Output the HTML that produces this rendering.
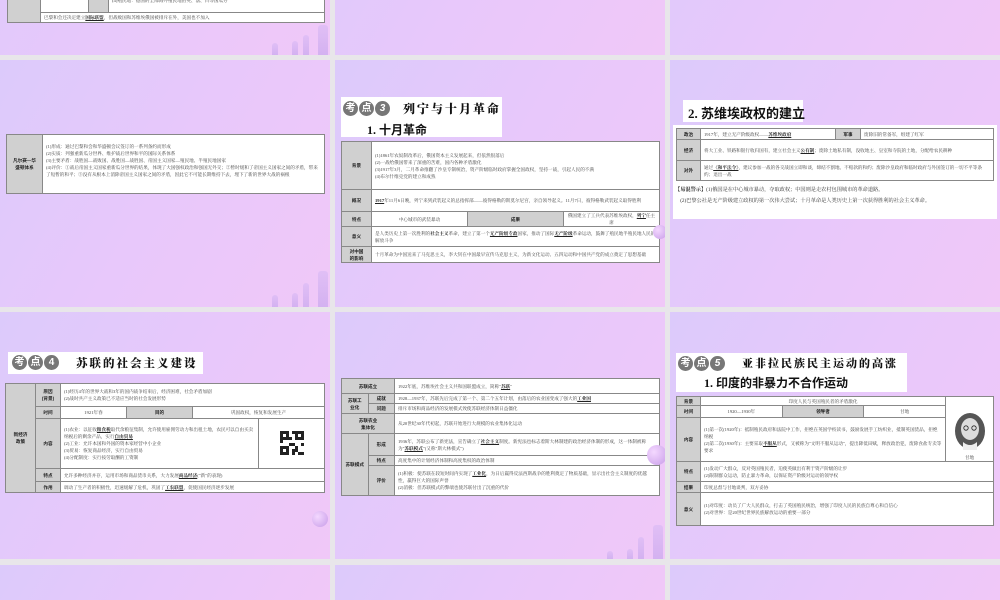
<!DOCTYPE html>
<html style="width:1000px;height:600px;overflow:hidden"><head><meta charset="utf-8"><style>
*{margin:0;padding:0;box-sizing:border-box}
body{width:1000px;height:600px;overflow:hidden;background:#e8e6ea;position:relative;font-family:"Liberation Serif","Noto Serif CJK SC","Noto Sans CJK SC",serif;color:#333}
.s{position:absolute;width:330px;height:247px;overflow:hidden;background:linear-gradient(120deg,#dccafb 0%,#e8c8fb 50%,#f0c8f8 100%)}
.bar{position:absolute;bottom:0;width:6px;background:linear-gradient(#d2b6f3,#b89ae9);border-radius:3px 3px 0 0;opacity:.5}
.ball{position:absolute;border-radius:50%;background:radial-gradient(circle at 35% 35%,#f4d8ff,#c79ce8)}
table{position:absolute;border-collapse:collapse;table-layout:fixed;background:#fff;font-size:4.6px;line-height:7px}
td{border:1px solid #888;padding:0 3px;vertical-align:middle;color:#444}
td.g{background:#d0d0d0;text-align:center;font-weight:bold;font-family:"Liberation Sans","Noto Sans CJK SC",sans-serif;color:#222;padding:0}
td.c{text-align:center}
table{border:1.5px solid #666}
.hb{position:absolute;background:#fff}
.kd{position:absolute;font-family:"Liberation Sans","Noto Sans CJK SC",sans-serif;font-weight:bold;color:#fff;font-size:10px}
.kd span{display:inline-block;width:15px;height:15px;border-radius:50%;background:#777;text-align:center;line-height:15px;margin-right:1px}
.t1{position:absolute;font-family:"Noto Serif CJK SC",serif;font-weight:900;font-size:12px;color:#111;letter-spacing:2px}
.t2{position:absolute;font-family:"Liberation Serif","Noto Sans CJK SC",serif;font-weight:bold;font-size:12px;color:#111}
b{color:#222}
</style></head><body>

<!-- Row 1 -->
<div class="s" style="left:0;top:-192px">
<table style="left:7px;top:180px;width:318px;height:35px"><tr style="height:24px"><td class="g" style="width:33px" rowspan="2"></td><td style="width:48px"></td><td class="g" style="width:20px"></td><td>(4)殖民地：德国的全部海外殖民地由英、法、日等国瓜分</td></tr><tr><td colspan="3">巴黎和会还决定建立<b><u>国际联盟</u></b>，但战败国和苏维埃俄国被排斥在外，美国也不加入</td></tr></table>
<div class="bar" style="left:272px;height:12px"></div><div class="bar" style="left:292px;height:14px"></div><div class="bar" style="left:303px;height:20px"></div><div class="bar" style="left:318px;height:30px;width:10px"></div>
</div>
<div class="s" style="left:335px;top:-192px"></div>
<div class="s" style="left:670px;top:-192px"></div>

<!-- Row 2 -->
<div class="s" style="left:0;top:60px">
<table style="left:6px;top:74px;width:319px;height:60px"><tr><td class="g" style="width:36px">凡尔赛—华<br>盛顿体系</td><td>(1)形成：通过巴黎和会和华盛顿会议签订的一系列条约而形成<br>(2)实质：列强重新瓜分世界、维护战后世界和平的国际关系体系<br>(3)主要矛盾：战胜国—战败国、战胜国—战胜国、帝国主义国家—殖民地、半殖民地国家<br>(4)评价：①战后帝国主义国家重新瓜分世界的结果，体现了大国强权政治和强国无外交；②暂时缓和了帝国主义国家之间的矛盾，带来了短暂的和平；③没有从根本上消除帝国主义国家之间的矛盾，因此它不可能长期维持下去，埋下了新的世界大战的祸根<br>&nbsp;</td></tr></table>
<div class="bar" style="left:272px;height:12px"></div><div class="bar" style="left:292px;height:14px"></div><div class="bar" style="left:303px;height:24px"></div><div class="bar" style="left:318px;height:36px;width:10px"></div>
</div>

<div class="s" style="left:335px;top:60px">
<div class="hb" style="left:6px;top:37px;width:161px;height:40px"></div>
<div class="kd" style="left:8px;top:41px"><span>考</span><span>点</span><span style="font-style:italic">3</span></div>
<div class="t1" style="left:68px;top:40px">列宁与十月革命</div>
<div class="t2" style="left:32px;top:61px">1. 十月革命</div>
<table style="left:6px;top:81px;width:319px;height:122px">
<tr style="height:48px"><td class="g" style="width:30px">背景</td><td colspan="3">(1)1861年农奴制改革后，俄国资本主义发展起来，但依然很落后<br>(2)一战给俄国带来了深重的苦难，国内各种矛盾激化<br>(3)1917年3月，二月革命推翻了沙皇专制统治，资产阶级临时政府掌握全国政权，坚持一战，引起人民的不满<br>(4)布尔什维克党的建立和成熟</td></tr>
<tr style="height:22px"><td class="g">概况</td><td colspan="3"><b><u>1917</u></b>年11月6日晚，列宁来到武装起义的总指挥部——彼得格勒的斯莫尔尼宫，亲自领导起义。11月7日，彼得格勒武装起义取得胜利</td></tr>
<tr style="height:11px"><td class="g">特点</td><td class="c" style="width:95px">中心城市的武装暴动</td><td class="g" style="width:30px">成果</td><td class="c">俄国建立了工兵代表苏维埃政权，<b><u>列宁</u></b>任主席</td></tr>
<tr style="height:20px"><td class="g">意义</td><td colspan="3">是人类历史上第一次胜利的<b>社会主义</b>革命，建立了第一个<b><u>无产阶级专政</u></b>国家，推动了国际<b><u>无产阶级</u></b>革命运动，鼓舞了殖民地半殖民地人民的解放斗争</td></tr>
<tr><td class="g">对中国<br>的影响</td><td colspan="3">十月革命为中国送来了马克思主义，李大钊在中国最早宣传马克思主义，为新文化运动、五四运动和中国共产党的成立奠定了思想基础</td></tr>
</table>
<div class="ball" style="left:318px;top:165px;width:14px;height:14px"></div>
</div>

<div class="s" style="left:670px;top:60px">
<div class="hb" style="left:3px;top:65px;width:324px;height:94px"></div>
<div class="hb" style="left:13px;top:40px;width:120px;height:22px"></div>
<div class="t2" style="left:18px;top:43px;font-size:13px">2. 苏维埃政权的建立</div>
<table style="left:6px;top:68px;width:318px;height:53px">
<tr style="height:11px"><td class="g" style="width:24px">政治</td><td style="width:135px">1917年，建立无产阶级政权——<b><u>苏维埃政府</u></b></td><td class="g" style="width:25px">军事</td><td>废除旧的常备军，组建了红军</td></tr>
<tr style="height:21px"><td class="g">经济</td><td colspan="3">将大工业、铁路和银行收归国有，建立社会主义<b><u>公有制</u></b>；废除土地私有制，没收地主、皇室和寺院的土地，分配给农民耕种</td></tr>
<tr><td class="g">对外</td><td colspan="3">通过<b><u>《和平法令》</u></b>，建议参加一战的各交战国立即和谈，缔结不割地、不赔款的和约；废除沙皇政府和临时政府与外国签订的一切不平等条约；退出一战</td></tr>
</table>
<div style="position:absolute;left:5px;top:125px;width:320px;font-size:5.2px;line-height:10.5px;color:#333"><b>【易混警示】</b>(1)俄国是在中心城市暴动，夺取政权；中国则是走农村包围城市的革命道路。<br>&nbsp;&nbsp;&nbsp;&nbsp;(2)巴黎公社是无产阶级建立政权的第一次伟大尝试；十月革命是人类历史上第一次获得胜利的社会主义革命。</div>
</div>

<!-- Row 3 -->
<div class="s" style="left:0;top:312px">
<div class="hb" style="left:8px;top:40px;width:195px;height:22px"></div>
<div class="kd" style="left:12px;top:43px"><span>考</span><span>点</span><span>4</span></div>
<div class="t1" style="left:76px;top:43px;font-size:11.5px">苏联的社会主义建设</div>
<table style="left:5px;top:71px;width:320px;height:110px">
<tr style="height:23px"><td class="g" rowspan="5" style="width:30px">新经济<br>政策</td><td class="g" style="width:25px">原因<br>(背景)</td><td colspan="4">(1)经历4年的世界大战和3年的国内战争结束后，经济困难，社会矛盾加剧<br>(2)战时共产主义政策已不适应当时的社会发展形势</td></tr>
<tr style="height:12px"><td class="g">时间</td><td class="c" style="width:105px">1921年春</td><td class="g" style="width:23px">目的</td><td class="c" colspan="2">巩固政权，恢复和发展生产</td></tr>
<tr style="height:50px"><td class="g">内容</td><td colspan="3">(1)农业：以征收<b><u>粮食税</u></b>取代余粮征集制，允许使用雇佣劳动力和出租土地，农民可以自由买卖纳税后的剩余产品，实行<b><u>自由贸易</u></b><br>(2)工业：允许本国和外国的资本家经营中小企业<br>(3)贸易：恢复商品经济，实行自由贸易<br>(4)分配制度：实行按劳取酬的工资制</td><td style="width:42px;text-align:center"><svg width="24" height="24" viewBox="0 0 8 8"><rect width="8" height="8" fill="#fff"/><path d="M0 0h3v3h-3zM5 0h3v3h-3zM0 5h3v3h-3z" fill="#222"/><path d="M1 1h1v1h-1zM6 1h1v1h-1zM1 6h1v1h-1z" fill="#fff"/><path d="M4 0h1v1h-1zM3 4h2v1h-2zM5 5h1v2h-1zM7 4h1v1h-1zM4 6h1v2h-1zM6 7h2v1h-2zM0 3h1v1h-1zM3 2h1v1h-1z" fill="#222"/></svg></td></tr>
<tr style="height:13px"><td class="g">特点</td><td colspan="4">允许多种经济并存，运用市场和商品货币关系，大力发展<b><u>商品经济</u></b>("新"的表现)</td></tr>
<tr><td class="g">作用</td><td colspan="4">调动了生产者的积极性，迅速缓解了危机，巩固了<b><u>工农联盟</u></b>，促使国民经济逐步发展</td></tr>
</table>
<div class="ball" style="left:312px;top:199px;width:16px;height:16px"></div>
</div>

<div class="s" style="left:335px;top:312px">
<table style="left:6px;top:66px;width:319px;height:118px">
<tr style="height:15px"><td class="g" colspan="2" style="width:53px">苏联成立</td><td>1922年底，苏维埃社会主义共和国联盟成立，简称"<b><u>苏联</u></b>"</td></tr>
<tr style="height:10px"><td class="g" rowspan="2" style="width:29px">苏联工<br>业化</td><td class="g" style="width:24px">成就</td><td>1928—1937年，苏联先后完成了第一个、第二个五年计划，由落后的农业国变成了强大的<b><u>工业国</u></b></td></tr>
<tr style="height:10px"><td class="g">问题</td><td>排斥市场和商品经济的发展模式致使苏联经济体制日益僵化</td></tr>
<tr style="height:20px"><td class="g" colspan="2">苏联农业<br>集体化</td><td>从20世纪30年代初起，苏联开始进行大规模的农业集体化运动</td></tr>
<tr style="height:22px"><td class="g" rowspan="3">苏联模式</td><td class="g">形成</td><td>1936年，苏联公布了新宪法，宣告确立了<b><u>社会主义</u></b>制度。新宪法也标志着斯大林制建的政治经济体制的形成，这一体制被称为"<b><u>苏联模式</u></b>"(又称"斯大林模式")</td></tr>
<tr style="height:10px"><td class="g">特点</td><td>高度集中的计划经济体制和高度集权的政治体制</td></tr>
<tr><td class="g">评价</td><td>(1)积极：使苏联在较短时间内实现了<b><u>工业化</u></b>，为日后赢得反法西斯战争的胜利奠定了物质基础，显示出社会主义制度的优越性，赢得巨大的国际声誉<br>(2)消极：但苏联模式的弊端也使苏联付出了沉重的代价</td></tr>
</table>
<div class="ball" style="left:312px;top:133px;width:20px;height:20px"></div>
<div class="bar" style="left:272px;height:8px"></div><div class="bar" style="left:292px;height:10px"></div><div class="bar" style="left:303px;height:22px"></div><div class="bar" style="left:318px;height:34px;width:10px"></div>
</div>

<div class="s" style="left:670px;top:312px">
<div class="hb" style="left:6px;top:41px;width:231px;height:39px"></div>
<div class="kd" style="left:8px;top:44px"><span>考</span><span>点</span><span style="font-style:italic">5</span></div>
<div class="t1" style="left:72px;top:43px;font-size:11px">亚非拉民族民主运动的高涨</div>
<div class="t2" style="left:34px;top:62px">1. 印度的非暴力不合作运动</div>
<table style="left:6px;top:84px;width:318px;height:130px">
<tr style="height:9px"><td class="g" style="width:24px">背景</td><td class="c" colspan="3">印度人民与英国殖民者的矛盾激化</td><td rowspan="3" style="width:48px;text-align:center;vertical-align:bottom"><svg width="34" height="40" viewBox="0 0 34 40"><ellipse cx="17" cy="19" rx="15" ry="18" fill="#555"/><ellipse cx="17" cy="17" rx="9" ry="11" fill="#ddd"/><circle cx="13" cy="16" r="2.2" fill="none" stroke="#222" stroke-width=".8"/><circle cx="21" cy="16" r="2.2" fill="none" stroke="#222" stroke-width=".8"/><path d="M10 30q7 6 14 0v8h-14z" fill="#eee"/></svg><br>甘地</td></tr>
<tr style="height:12px"><td class="g">时间</td><td class="c" style="width:112px">1920—1930年</td><td class="g" style="width:28px">领导者</td><td class="c">甘地</td></tr>
<tr style="height:44px"><td class="g">内容</td><td colspan="3">(1)第一次(1920年)：抵制殖民政府和法院中工作，拒绝在英国学校读书，鼓励发展手工纺织业，抵制英国货品，拒绝纳税<br>(2)第二次(1930年)：主要采取<b><u>不服从</u></b>形式，又被称为"文明不服从运动"，提出降低田赋，释放政治犯，废除食盐专卖等要求</td></tr>
<tr style="height:20px"><td class="g">特点</td><td colspan="4">(1)发动广大群众，反对英国殖民者，迫使英做出有利于资产阶级的让步<br>(2)限制群众运动，防止暴力革命，以保证资产阶级对运动的领导权</td></tr>
<tr style="height:11px"><td class="g">结果</td><td colspan="4">印度总督与甘地谈判，双方妥协</td></tr>
<tr><td class="g">意义</td><td colspan="4">(1)对印度：动员了广大人民群众，打击了英国殖民统治，增强了印度人民的民族自尊心和自信心<br>(2)对世界：是20世纪世界民族解放运动的重要一部分</td></tr>
</table>
</div>

<!-- Row 4 -->
<div class="s" style="left:0;top:565px;height:35px"></div>
<div class="s" style="left:335px;top:565px;height:35px"></div>
<div class="s" style="left:670px;top:565px;height:35px"></div>
</body></html>
